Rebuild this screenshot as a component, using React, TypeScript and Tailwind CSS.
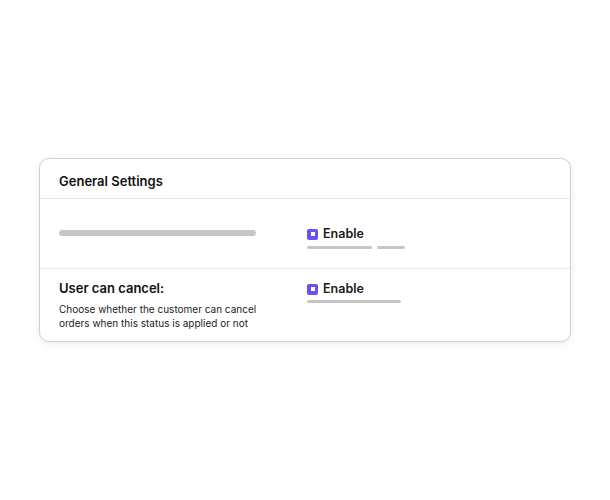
import React from "react";

function Check() {
  return (
    <span className="flex h-[11px] w-[11px] items-center justify-center rounded-[2px] bg-[#6c4ff5]">
      <span className="h-[4px] w-[4px] bg-white" />
    </span>
  );
}

function EnableRow() {
  return (
    <div className="flex h-[14px] items-center gap-[5px]">
      <Check />
      <span className="text-[12.5px] font-semibold leading-none text-[#1a1a1a]">Enable</span>
    </div>
  );
}

export default function App() {
  return (
    <div
      className="flex h-[500px] w-[610px] items-center justify-center bg-white"
      style={{ fontFamily: "Inter, 'Noto Sans', sans-serif" }}
    >
      <div className="w-[532px] rounded-[10px] border border-[#d0d0d0] bg-white shadow-[0_2px_8px_rgba(0,0,0,0.08)]">
        <div className="flex h-[40px] items-center border-b border-[#e6e6e6] px-[19px] pt-[7px]">
          <span className="text-[13px] font-semibold text-[#111]">General Settings</span>
        </div>
        <div className="grid h-[70px] grid-cols-[248px_1fr] border-b border-[#ebebeb] px-[19px]">
          <div className="pt-[31px]">
            <div className="h-[6px] w-[197px] rounded-full bg-[#c6c6c6]" />
          </div>
          <div className="flex flex-col pt-[28px]">
            <EnableRow />
            <div className="mt-[5px] flex gap-[5px]">
              <div className="h-[3px] w-[65px] rounded-full bg-[#c6c6c6]" />
              <div className="h-[3px] w-[28px] rounded-full bg-[#c6c6c6]" />
            </div>
          </div>
        </div>
        <div className="grid h-[72px] grid-cols-[248px_1fr] px-[19px]">
          <div className="pt-[11px]">
            <div className="text-[13px] font-semibold leading-[16px] text-[#111]">User can cancel:</div>
            <div className="mt-[6px] text-[10px] leading-[14px] text-[#222]">
              Choose whether the customer can cancel
              <br />
              orders when this status is applied or not
            </div>
          </div>
          <div className="flex flex-col pt-[13px]">
            <EnableRow />
            <div className="mt-[4px] h-[3px] w-[94px] rounded-full bg-[#c6c6c6]" />
          </div>
        </div>
      </div>
    </div>
  );
}
